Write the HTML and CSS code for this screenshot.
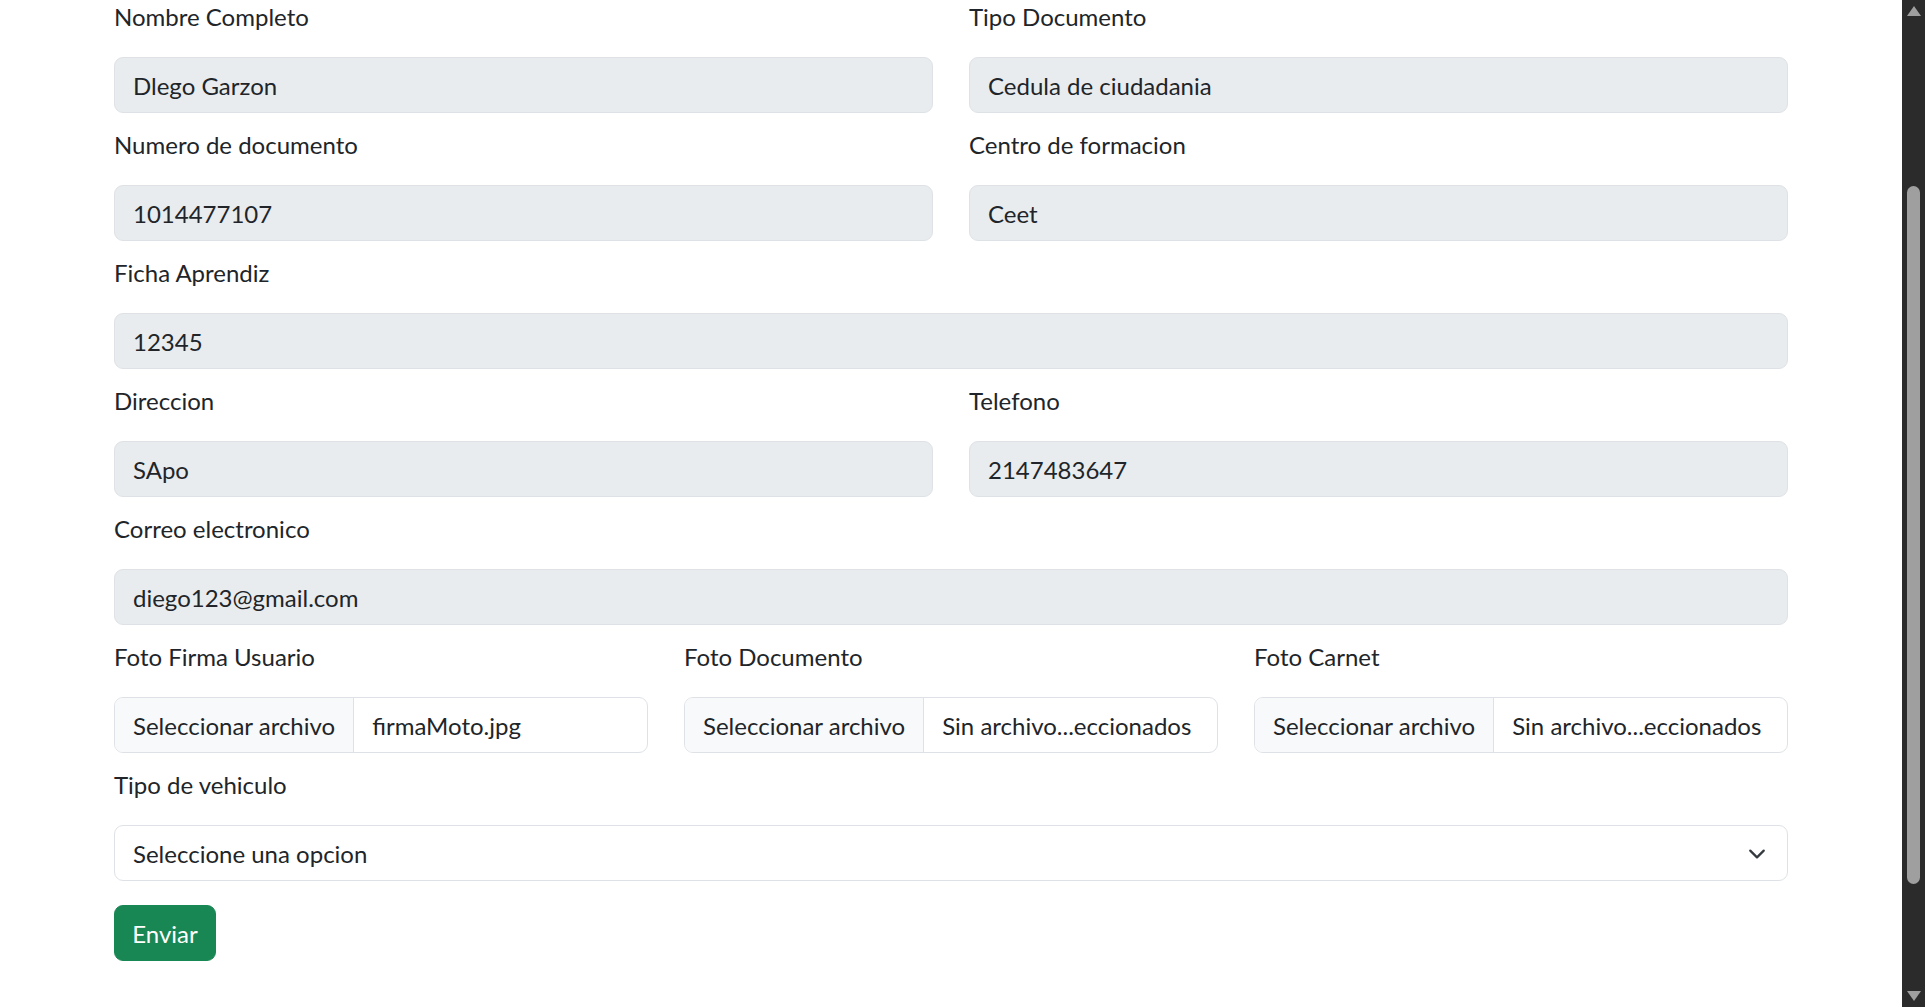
FILE: index.html
```html
<!DOCTYPE html>
<html lang="es">
<head>
<meta charset="utf-8">
<title>Formulario</title>
<link rel="stylesheet" href="styles.css">
</head>
<body>
<div class="page">
  <main class="main">
    <form class="container">
      <div class="row two">
        <div class="field">
          <label class="label">Nombre Completo</label>
          <div class="control readonly">Dlego Garzon</div>
        </div>
        <div class="field">
          <label class="label">Tipo Documento</label>
          <div class="control readonly">Cedula de ciudadania</div>
        </div>
      </div>
      <div class="row two">
        <div class="field">
          <label class="label">Numero de documento</label>
          <div class="control readonly">1014477107</div>
        </div>
        <div class="field">
          <label class="label">Centro de formacion</label>
          <div class="control readonly">Ceet</div>
        </div>
      </div>
      <div class="row">
        <div class="field">
          <label class="label">Ficha Aprendiz</label>
          <div class="control readonly">12345</div>
        </div>
      </div>
      <div class="row two">
        <div class="field">
          <label class="label">Direccion</label>
          <div class="control readonly">SApo</div>
        </div>
        <div class="field">
          <label class="label">Telefono</label>
          <div class="control readonly">2147483647</div>
        </div>
      </div>
      <div class="row">
        <div class="field">
          <label class="label">Correo electronico</label>
          <div class="control readonly">diego123@gmail.com</div>
        </div>
      </div>
      <div class="row three">
        <div class="field">
          <label class="label">Foto Firma Usuario</label>
          <div class="control file"><span class="file-btn">Seleccionar archivo</span><span class="file-name">firmaMoto.jpg</span></div>
        </div>
        <div class="field">
          <label class="label">Foto Documento</label>
          <div class="control file"><span class="file-btn">Seleccionar archivo</span><span class="file-name">Sin archivo...eccionados</span></div>
        </div>
        <div class="field">
          <label class="label">Foto Carnet</label>
          <div class="control file"><span class="file-btn">Seleccionar archivo</span><span class="file-name">Sin archivo...eccionados</span></div>
        </div>
      </div>
      <div class="row">
        <div class="field">
          <label class="label">Tipo de vehiculo</label>
          <div class="control select">
            <span>Seleccione una opcion</span>
            <svg class="chev" width="24" height="18" viewBox="0 0 16 16"><path fill="none" stroke="#343a40" stroke-linecap="round" stroke-linejoin="round" stroke-width="2" d="m2 5 6 6 6-6"/></svg>
          </div>
        </div>
      </div>
      <button type="button" class="btn">Enviar</button>
    </form>
  </main>
  <aside class="scrollbar">
    <span class="arrow up"></span>
    <span class="thumb"></span>
    <span class="arrow down"></span>
  </aside>
</div>
</body>
</html>
```
FILE: styles.css
```css
html, body {
  margin: 0;
  padding: 0;
}
body {
  font-family: Lato, "Noto Sans", sans-serif;
  font-size: 24px;
  color: #212529;
  background: #fff;
}
.page {
  display: flex;
  height: 1007px;
  overflow: hidden;
}
.main {
  flex: 1;
  min-width: 0;
}
.container {
  width: 1674px;
  margin: -1px auto 0;
}
.row {
  display: grid;
  grid-template-columns: 1fr;
  column-gap: 36px;
}
.row.two {
  grid-template-columns: 1fr 1fr;
}
.row.three {
  grid-template-columns: 1fr 1fr 1fr;
}
.field {
  display: flex;
  flex-direction: column;
  padding-bottom: 14px;
}
.label {
  display: block;
  line-height: 36px;
  margin-bottom: 22px;
}
.control {
  box-sizing: border-box;
  height: 56px;
  border: 1.5px solid #dee2e6;
  border-radius: 9px;
  padding: 1px 18px 0;
  display: flex;
  align-items: center;
  line-height: 36px;
  background: #fff;
  white-space: nowrap;
}
.control.readonly {
  background: #e9ecef;
}
.control.file {
  padding: 0;
  overflow: hidden;
}
.file-btn {
  align-self: stretch;
  display: flex;
  align-items: center;
  padding: 1px 18px 0;
  background: #f8f9fa;
  border-right: 1.5px solid #dee2e6;
}
.file-name {
  padding: 1px 0 0 18px;
}
.control.select {
  justify-content: space-between;
  padding-right: 18px;
}
.chev {
  display: block;
}
.btn {
  margin-top: 10px;
  height: 56px;
  width: 102px;
  padding: 1px 0 0;
  font: inherit;
  line-height: 36px;
  color: #fff;
  background: #198754;
  border: 1.5px solid #198754;
  border-radius: 9px;
}
.scrollbar {
  width: 23px;
  flex: none;
  background: #2b2b2b;
  display: flex;
  flex-direction: column;
  align-items: center;
}
.arrow {
  width: 0;
  height: 0;
  border-left: 7px solid transparent;
  border-right: 7px solid transparent;
}
.arrow.up {
  margin-top: 6px;
  border-bottom: 10px solid #9f9f9f;
}
.thumb {
  margin-top: 170px;
  width: 13px;
  height: 698px;
  border-radius: 7px;
  background: #9f9f9f;
}
.arrow.down {
  margin-top: auto;
  margin-bottom: 6px;
  border-top: 10px solid #9f9f9f;
}
```
